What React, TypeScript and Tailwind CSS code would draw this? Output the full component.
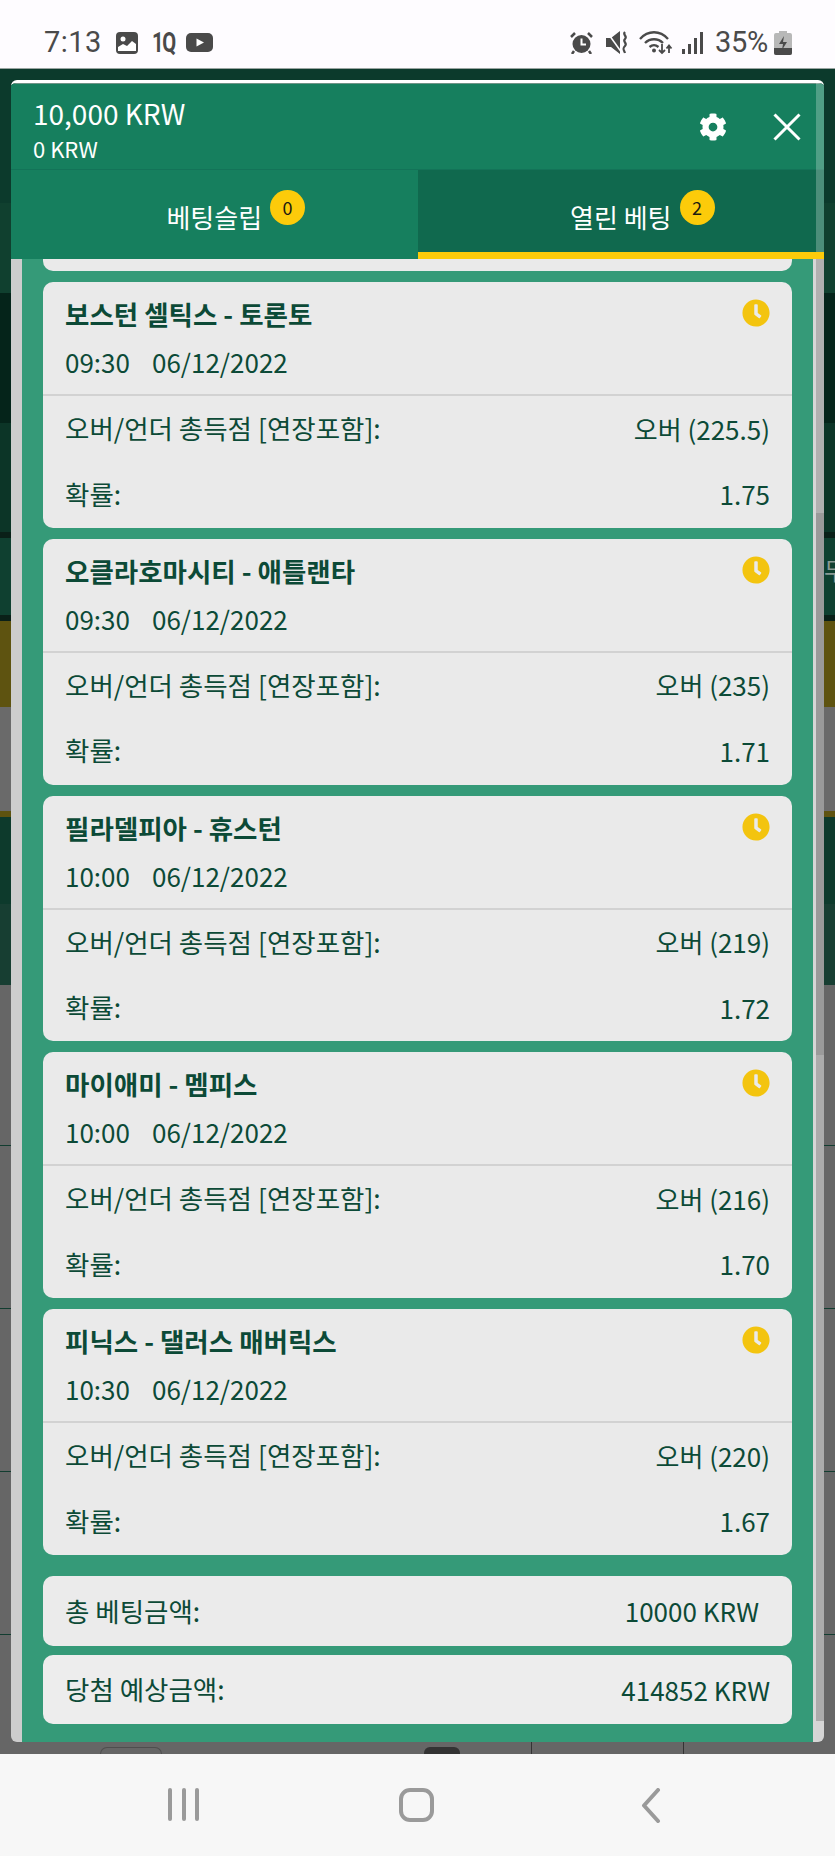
import React from "react";
import { FaClock, FaCog } from "react-icons/fa";

const cards = [
  { title: "보스턴 셀틱스 - 토론토", time: "09:30", pick: "오버 (225.5)", odds: "1.75" },
  { title: "오클라호마시티 - 애틀랜타", time: "09:30", pick: "오버 (235)", odds: "1.71" },
  { title: "필라델피아 - 휴스턴", time: "10:00", pick: "오버 (219)", odds: "1.72" },
  { title: "마이애미 - 멤피스", time: "10:00", pick: "오버 (216)", odds: "1.70" },
  { title: "피닉스 - 댈러스 매버릭스", time: "10:30", pick: "오버 (220)", odds: "1.67" },
];

function StatusBar() {
  return (
    <div className="h-[69px] shrink-0 bg-[#fefcff] border-b border-[#9aa5a1] flex items-center pt-[17px] text-[#4a4a4a] [font-family:Roboto,sans-serif]">
      <span className="ml-[44px] w-[60px] text-[29px] leading-none tracking-[0.5px]">7:13</span>
      <svg className="ml-[12px]" width="22" height="22" viewBox="0 0 22 22">
        <rect width="22" height="22" rx="4" fill="#4a4a4a" />
        <circle cx="7" cy="7" r="2.5" fill="#fff" />
        <path d="M2 19v-4l5-3 4 2 5-5 4 3v7z" fill="#fff" />
      </svg>
      <span className="ml-[14px] w-[24px] text-[28px] leading-none font-bold tracking-[-2px] origin-left scale-x-[0.72]">1Q</span>
      <svg className="ml-[10px]" width="27" height="19" viewBox="0 0 27 19">
        <rect width="27" height="19" rx="5" fill="#4a4a4a" />
        <path d="M10.5 5.5l7.5 4-7.5 4z" fill="#fff" />
      </svg>
      <div className="flex-1" />
      <svg width="23" height="22" viewBox="0 0 23 22">
        <circle cx="11.5" cy="12" r="9" fill="#4a4a4a" />
        <path d="M11.5 6.5V12.5H16" stroke="#fff" strokeWidth="2" fill="none" />
        <path d="M1 5l4-4M22 5l-4-4M4 19l-2 3M19 19l2 3" stroke="#4a4a4a" strokeWidth="2.5" />
      </svg>
      <svg className="ml-[13px]" width="23" height="23" viewBox="0 0 23 23">
        <path d="M0 7h5l9-7v23l-9-7H0z" fill="#4a4a4a" />
        <path d="M1 1l15 21" stroke="#fefcff" strokeWidth="1.5" />
        <path d="M19 1c-3 3 3 4 0 7s3 4 0 7-1 4 0 7" stroke="#4a4a4a" strokeWidth="2.2" fill="none" />
      </svg>
      <svg className="ml-[10px]" width="34" height="25" viewBox="0 0 34 25">
        <path d="M1 9c8-9 20-9 28 0M6 13c5-5 13-5 18 0M10.500 17c3-2.500 6-2.500 9 0" stroke="#4a4a4a" strokeWidth="2.300" fill="none" />
        <circle cx="15" cy="20.500" r="2" fill="#4a4a4a" />
        <path d="M23 14v9M20 20l3 3 3-3M30 23v-7M27.500 18.500l2.500-3 2.500 3" stroke="#4a4a4a" strokeWidth="1.800" fill="none" />
      </svg>
      <svg className="ml-[9px]" width="21" height="22" viewBox="0 0 21 22">
        <rect x="0" y="17" width="3" height="5" fill="#4a4a4a" />
        <rect x="6" y="12" width="3" height="10" fill="#4a4a4a" />
        <rect x="12" y="6" width="3" height="16" fill="#4a4a4a" />
        <rect x="18" y="0" width="3" height="22" fill="#4a4a4a" />
      </svg>
      <span className="ml-[12px] w-[53px] text-[29px] leading-none tracking-[-0.3px]">35%</span>
      <svg className="ml-[6px] mr-[43px]" width="18" height="24" viewBox="0 0 18 24">
        <path d="M5 0h8v2h3a2 2 0 012 2v18a2 2 0 01-2 2H2a2 2 0 01-2-2V4a2 2 0 012-2h3z" fill="#b8b8b8" />
        <path d="M0 17h18v5a2 2 0 01-2 2H2a2 2 0 01-2-2z" fill="#4a4a4a" />
        <path d="M10 5l-5 8h4l-1 6 5-8H9z" fill="#4a4a4a" />
      </svg>
    </div>
  );
}

function Background() {
  return (
    <div className="flex-1 flex flex-col min-h-0 bg-[#666666]">
      <div className="h-[134px] bg-[#0c3a2c]" />
      <div className="h-[90px] bg-[#10402f]" />
      <div className="h-[130px] bg-[#05241a]" />
      <div className="h-[109px] bg-[#0c3527]" />
      <div className="h-[89px] bg-[#0f4030] border-y-[6px] border-[#0a2018] relative">
        <span className="absolute right-[-11px] top-[20px] text-[24px] leading-none text-[#8a9a94] [font-family:'Noto_Sans_CJK_KR',sans-serif]">무</span>
      </div>
      <div className="h-[86px] bg-[#5e5310]" />
      <div className="h-[104px] bg-[#6a6a6a]" />
      <div className="h-[6px] bg-[#5e5310]" />
      <div className="h-[87px] bg-[#0d3a2c]" />
      <div className="h-[81px] bg-[#173e32]" />
      <div className="h-[161px] bg-[#666666] border-b border-[#123d30]" />
      <div className="h-[163px] bg-[#666666] border-b border-[#123d30]" />
      <div className="h-[163px] bg-[#666666] border-b border-[#123d30]" />
      <div className="h-[163px] bg-[#666666] border-b border-[#123d30]" />
      <div className="flex-1 flex items-end">
        <div className="ml-[100px] w-[62px] h-[7px] border border-b-0 border-[#4e4e4e] rounded-t-lg" />
        <div className="ml-[262px] w-[36px] h-[7px] bg-[#333333] rounded-t-md" />
        <div className="ml-[71px] w-px h-[12px] bg-[#333333]" />
        <div className="ml-[151px] w-px h-[12px] bg-[#333333]" />
      </div>
    </div>
  );
}

function Badge({ n }: { n: string }) {
  return (
    <span className="absolute left-full ml-[8px] top-[-7px] w-[35px] h-[35px] rounded-full bg-[#fccb0a] text-[#1c1c10] text-[18px] leading-[35px] text-center">
      {n}
    </span>
  );
}

function Card({ c }: { c: (typeof cards)[number] }) {
  return (
    <div className="h-[245.75px] mb-[11px] rounded-[10px] bg-[#eaeaea] text-[#0c4a37] overflow-hidden">
      <div className="h-[114px] pt-[8px] px-[22px] border-b-2 border-[#d2d2d2] relative">
        <div className="h-[48px] leading-[48px] font-bold text-[26.5px]">{c.title}</div>
        <div className="h-[48px] leading-[48px]">
          {c.time}
          <span className="ml-[22px]">06/12/2022</span>
        </div>
        <FaClock className="absolute right-[22px] top-[17px] text-[#f3c40f]" size={28} />
      </div>
      <div className="h-[65px] px-[22px] pb-[1px] flex items-center justify-between">
        <span className="text-[26.5px]">오버/언더 총득점 [연장포함]:</span>
        <span>{c.pick}</span>
      </div>
      <div className="h-[65px] px-[22px] flex items-center justify-between">
        <span className="text-[26.5px]">확률:</span>
        <span>{c.odds}</span>
      </div>
    </div>
  );
}

function Modal() {
  return (
    <div className="absolute left-[11px] top-[80px] w-[813px] h-[1662px] flex flex-col rounded-[6px] overflow-hidden border-t-[3px] border-white text-[26px] [font-family:'Noto_Sans_CJK_KR','Noto_Sans',sans-serif]">
      <div className="relative shrink-0">
        <div className="h-[87px] bg-[#167f5e] border-t border-[#6f9487] border-b border-b-[#137358] flex items-center justify-between pl-[22px] pr-[23px] text-white">
          <div className="pt-[5px]">
            <div className="text-[28px] leading-[38px]">10,000 KRW</div>
            <div className="text-[22px] leading-[32px]">0 KRW</div>
          </div>
          <div className="flex items-center gap-[46px]">
            <FaCog size={28} />
            <svg width="28" height="28" viewBox="0 0 28 28">
              <path d="M1.500 1.500l25 25M26.500 1.500l-25 25" stroke="#fff" strokeWidth="3" fill="none" />
            </svg>
          </div>
        </div>
        <div className="h-[89px] flex text-white">
          <div className="flex-1 bg-[#167f5e] flex items-center justify-center pt-[11px] pb-[7px]">
            <span className="relative leading-[40px]">
              베팅슬립
              <Badge n="0" />
            </span>
          </div>
          <div className="flex-1 bg-[#10694e] border-b-[7px] border-[#fccb0a] flex items-center justify-center pt-[11px]">
            <span className="relative leading-[40px]">
              열린 베팅
              <Badge n="2" />
            </span>
          </div>
        </div>
        <div className="absolute right-0 top-0 w-[8px] h-[169px] bg-white/25" />
      </div>
      <div className="flex-1 min-h-0 flex">
        <div className="w-[11px] bg-[#cdcdcd]" />
        <div className="flex-1 bg-[#359a78] pl-[21px] pr-[21px]">
          <div className="h-[12px] mb-[11px] rounded-b-[10px] bg-[#eaeaea]" />
          {cards.map((c) => (
            <Card key={c.title} c={c} />
          ))}
          <div className="mt-[21px] h-[70px] mb-[9px] rounded-[10px] bg-[#ebebeb] text-[#0c4a37] pl-[22px] pr-[33px] flex items-center justify-between">
            <span className="text-[26.5px]">총 베팅금액:</span>
            <span>10000 KRW</span>
          </div>
          <div className="h-[69px] rounded-[10px] bg-[#ededed] text-[#0c4a37] px-[22px] flex items-center justify-between">
            <span className="text-[26.5px]">당첨 예상금액:</span>
            <span>414852 KRW</span>
          </div>
        </div>
        <div className="w-[3px] bg-[#d6d6d6]" />
        <div className="w-[8px] flex flex-col">
          <div className="h-[254px] bg-[#b0b0b0]" />
          <div className="h-[542px] bg-[#9a9a9a]" />
          <div className="flex-1 bg-[#ababab]" />
          <div className="h-[21px] bg-[#d5d5d5]" />
        </div>
      </div>
    </div>
  );
}

function NavBar() {
  return (
    <div className="h-[102px] shrink-0 bg-[#f7f7f7] flex items-start pt-[34px]">
      <div className="ml-[168px] w-[31px] h-[33px] flex justify-between">
        <div className="w-[4px] h-full rounded-full bg-[#9a9a9a]" />
        <div className="w-[4px] h-full rounded-full bg-[#9a9a9a]" />
        <div className="w-[4px] h-full rounded-full bg-[#9a9a9a]" />
      </div>
      <div className="ml-[200px] w-[35px] h-[34px] rounded-[11px] border-[4px] border-[#9a9a9a]" />
      <svg className="ml-[207px]" width="20" height="35" viewBox="0 0 20 35">
        <path d="M17 2L3 17.500 17 33" stroke="#9a9a9a" strokeWidth="4" strokeLinecap="round" strokeLinejoin="round" fill="none" />
      </svg>
    </div>
  );
}

export default function App() {
  return (
    <div className="relative w-[835px] h-[1856px] overflow-hidden flex flex-col">
      <StatusBar />
      <Background />
      <NavBar />
      <Modal />
    </div>
  );
}
